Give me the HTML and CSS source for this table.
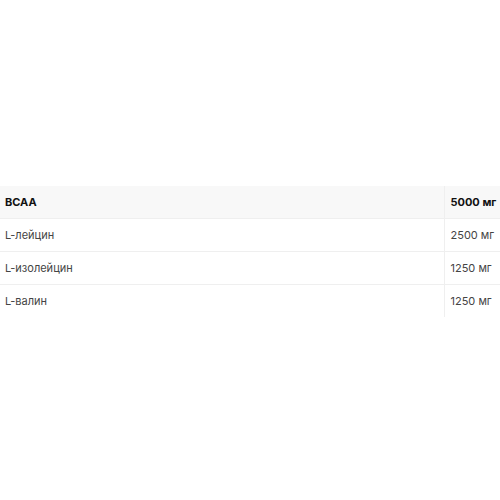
FILE: index.html
```html
<!DOCTYPE html>
<html lang="ru">
<head>
<meta charset="utf-8">
<link rel="stylesheet" href="styles.css">
</head>
<body>
<div class="page">
  <table class="facts">
    <colgroup><col class="c-name"><col class="c-val"></colgroup>
    <tr class="head"><td>BCAA</td><td>5000 мг</td></tr>
    <tr><td>L-лейцин</td><td>2500 мг</td></tr>
    <tr><td>L-изолейцин</td><td>1250 мг</td></tr>
    <tr><td>L-валин</td><td>1250 мг</td></tr>
  </table>
</div>
</body>
</html>
```
FILE: styles.css
```css
html, body { margin: 0; padding: 0; background: #fff; }
.page { padding-top: 186px; font-family: Inter, "Noto Sans", sans-serif; }
.facts { width: 500px; border-collapse: collapse; table-layout: fixed; font-size: 11px; color: #444; }
.c-name { width: 444px; }
.c-val { width: 56px; }
.facts td { height: 33px; padding: 0 5px; border-bottom: 1px solid #efefef; box-sizing: border-box; white-space: nowrap; }
.facts td + td { border-left: 1px solid #efefef; padding-left: 6px; padding-right: 0; }
.facts tr:last-child td { border-bottom: none; }
.head td { background: #f8f8f8; font-weight: 700; color: #111; height: 32px; }
```
